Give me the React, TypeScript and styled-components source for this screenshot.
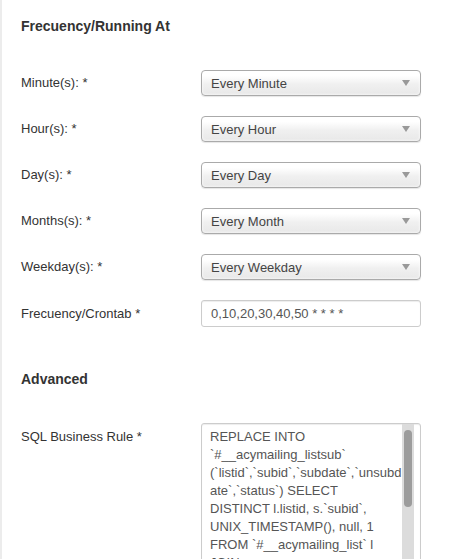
import styled, { createGlobalStyle } from "styled-components";

const GlobalStyle = createGlobalStyle`
  html, body {
    margin: 0;
    padding: 0;
    background: #fff;
  }
  body {
    font-family: "Liberation Sans", Arial, sans-serif;
    color: #333;
    overflow: hidden;
  }
`;

// the line break after SELECT matches where the original textarea wrapped
const sql =
  "REPLACE INTO `#__acymailing_listsub` (`listid`,`subid`,`subdate`,`unsubdate`,`status`) SELECT\nDISTINCT l.listid, s.`subid`, UNIX_TIMESTAMP(), null, 1 FROM `#__acymailing_list` l JOIN `#__acymailing_subscriber` s ON 1 = 1 WHERE l.published = 1";

const selects = [
  { label: "Minute(s): *", value: "Every Minute" },
  { label: "Hour(s): *", value: "Every Hour" },
  { label: "Day(s): *", value: "Every Day" },
  { label: "Months(s): *", value: "Every Month" },
  { label: "Weekday(s): *", value: "Every Weekday" },
];

const App = () => {
  return (
    <Page>
      <GlobalStyle />
      <Heading>Frecuency/Running At</Heading>
      <Rows>
        {selects.map((s) => (
          <Row key={s.label}>
            <Label>{s.label}</Label>
            <Select>
              <span>{s.value}</span>
              <Arrow />
            </Select>
          </Row>
        ))}
        <Row>
          <Label>Frecuency/Crontab *</Label>
          <TextInput>0,10,20,30,40,50 * * * *</TextInput>
        </Row>
      </Rows>
      <Heading $top={42}>Advanced</Heading>
      <SqlRow>
        <Label $top>SQL Business Rule *</Label>
        <TextArea>
          <AreaText>{sql}</AreaText>
          <Track>
            <Thumb />
          </Track>
        </TextArea>
      </SqlRow>
    </Page>
  );
};

const Page = styled.div`
  height: 559px;
  box-sizing: border-box;
  border-left: 2px solid #ececec;
  padding: 16px 0 0 19px;
  overflow: hidden;
`;

const Heading = styled.div<{ $top?: number }>`
  font-size: 14px;
  font-weight: bold;
  line-height: 20px;
  color: #333;
  margin-top: ${(p) => p.$top ?? 0}px;
`;

const Rows = styled.div`
  display: flex;
  flex-direction: column;
  gap: 20px;
  margin-top: 34px;
`;

const Row = styled.div`
  display: flex;
  align-items: center;
`;

const Label = styled.div<{ $top?: boolean }>`
  width: 180px;
  font-size: 13px;
  line-height: 18px;
  color: #333;
  align-self: ${(p) => (p.$top ? "flex-start" : "center")};
  padding-top: ${(p) => (p.$top ? "5px" : "0")};
`;

const Select = styled.div`
  width: 220px;
  height: 26px;
  box-sizing: border-box;
  display: flex;
  align-items: center;
  justify-content: space-between;
  padding: 0 10px 0 9px;
  border: 1px solid #aaa;
  border-radius: 4px;
  background: linear-gradient(#fff 20%, #f0f0f0 55%, #e8e8e8);
  box-shadow: 0 0 3px #fff inset, 0 1px 1px rgba(0, 0, 0, 0.1);
  font-size: 13px;
  color: #444;
`;

const Arrow = styled.span`
  width: 0;
  height: 0;
  border-left: 4px solid transparent;
  border-right: 4px solid transparent;
  border-top: 6px solid #999;
`;

const TextInput = styled.div`
  width: 220px;
  height: 27px;
  box-sizing: border-box;
  display: flex;
  align-items: center;
  padding: 0 9px;
  border: 1px solid #ccc;
  border-radius: 3px;
  box-shadow: 0 1px 1px rgba(0, 0, 0, 0.075) inset;
  font-size: 13px;
  color: #555;
`;

const SqlRow = styled.div`
  display: flex;
  margin-top: 34px;
`;

const TextArea = styled.div`
  width: 220px;
  height: 160px;
  box-sizing: border-box;
  display: flex;
  border: 1px solid #ccc;
  border-radius: 3px;
  box-shadow: 0 1px 1px rgba(0, 0, 0, 0.075) inset;
  overflow: hidden;
`;

const AreaText = styled.div`
  flex: 1;
  min-width: 0;
  padding: 4px 0 0 8px;
  font-size: 13px;
  line-height: 18px;
  color: #555;
  white-space: pre-line;
  overflow-wrap: anywhere;
`;

const Track = styled.div`
  width: 12px;
  margin-right: 6px;
  background: #dcdcdc;
  display: flex;
  justify-content: center;
  padding-top: 6px;
`;

const Thumb = styled.div`
  width: 8px;
  height: 77px;
  border-radius: 4px;
  background: #9c9c9c;
`;

export default App;
